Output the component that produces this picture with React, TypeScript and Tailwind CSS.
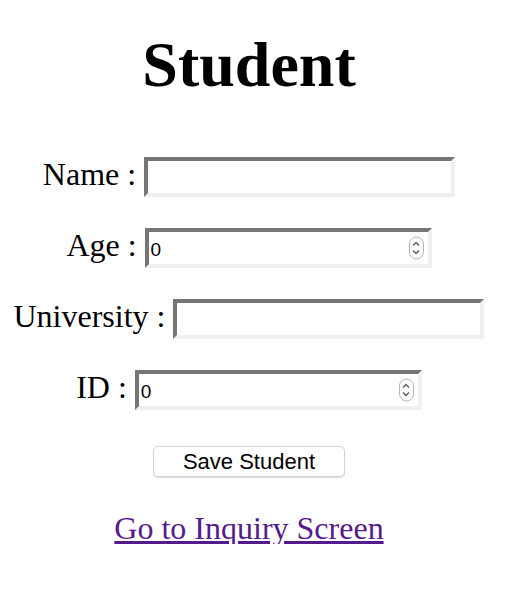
import { useState } from "react";

const serif = "font-['Liberation_Serif',_'Times_New_Roman',_serif]";

function Spinner() {
  return (
    <div className="pointer-events-none absolute right-[8px] top-1/2 -translate-y-1/2 h-[23px] w-[15px] rounded-full border border-[#b5b5b5] bg-white flex flex-col items-center justify-center gap-[3px]">
      <svg width="8" height="5" viewBox="0 0 8 5" fill="none">
        <path d="M1 4 L4 1 L7 4" stroke="#555" strokeWidth="1.3" />
      </svg>
      <svg width="8" height="5" viewBox="0 0 8 5" fill="none">
        <path d="M1 1 L4 4 L7 1" stroke="#555" strokeWidth="1.3" />
      </svg>
    </div>
  );
}

function Field({
  label,
  width,
  numeric,
}: {
  label: string;
  width: string;
  numeric?: boolean;
}) {
  const [value, setValue] = useState(numeric ? "0" : "");
  return (
    <div className="flex items-center justify-center h-[40px]">
      <label className={`${serif} text-[32px] leading-none text-black whitespace-pre mb-[6px]`}>
        {label + " : "}
      </label>
      <div className={`relative h-[40px] ${width}`}>
        <input
          value={value}
          onChange={(e) => setValue(e.target.value)}
          className="h-full w-full border-[4px] border-t-[#767676] border-l-[#767676] border-b-[#f0f0f0] border-r-[#f0f0f0] bg-white pl-[2px] pt-[3px] text-[19px] leading-none text-black font-['Liberation_Sans',_Arial,_sans-serif] outline-none"
        />
        {numeric && <Spinner />}
      </div>
    </div>
  );
}

export default function App() {
  return (
    <div className="w-[498px] bg-white flex flex-col items-center">
      <h1 className={`${serif} text-[64px] leading-none font-bold text-black mt-[33px]`}>
        Student
      </h1>
      <div className="mt-[60px] flex flex-col gap-[31px]">
        <Field label="Name" width="w-[311px]" />
        <Field label="Age" width="w-[287px]" numeric />
        <Field label="University" width="w-[311px]" />
        <Field label="ID" width="w-[287px]" numeric />
      </div>
      <button className="mt-[36px] h-[31px] w-[192px] rounded-[5px] border border-[#d4d4d4] bg-white shadow-[0_1px_1px_rgba(0,0,0,0.15)] text-[22px] leading-none text-black font-['Liberation_Sans',_Arial,_sans-serif]">
        Save Student
      </button>
      <a
        href="#"
        className={`${serif} mt-[35px] text-[32px] leading-none text-[#551a8b] underline`}
      >
        Go to Inquiry Screen
      </a>
    </div>
  );
}
